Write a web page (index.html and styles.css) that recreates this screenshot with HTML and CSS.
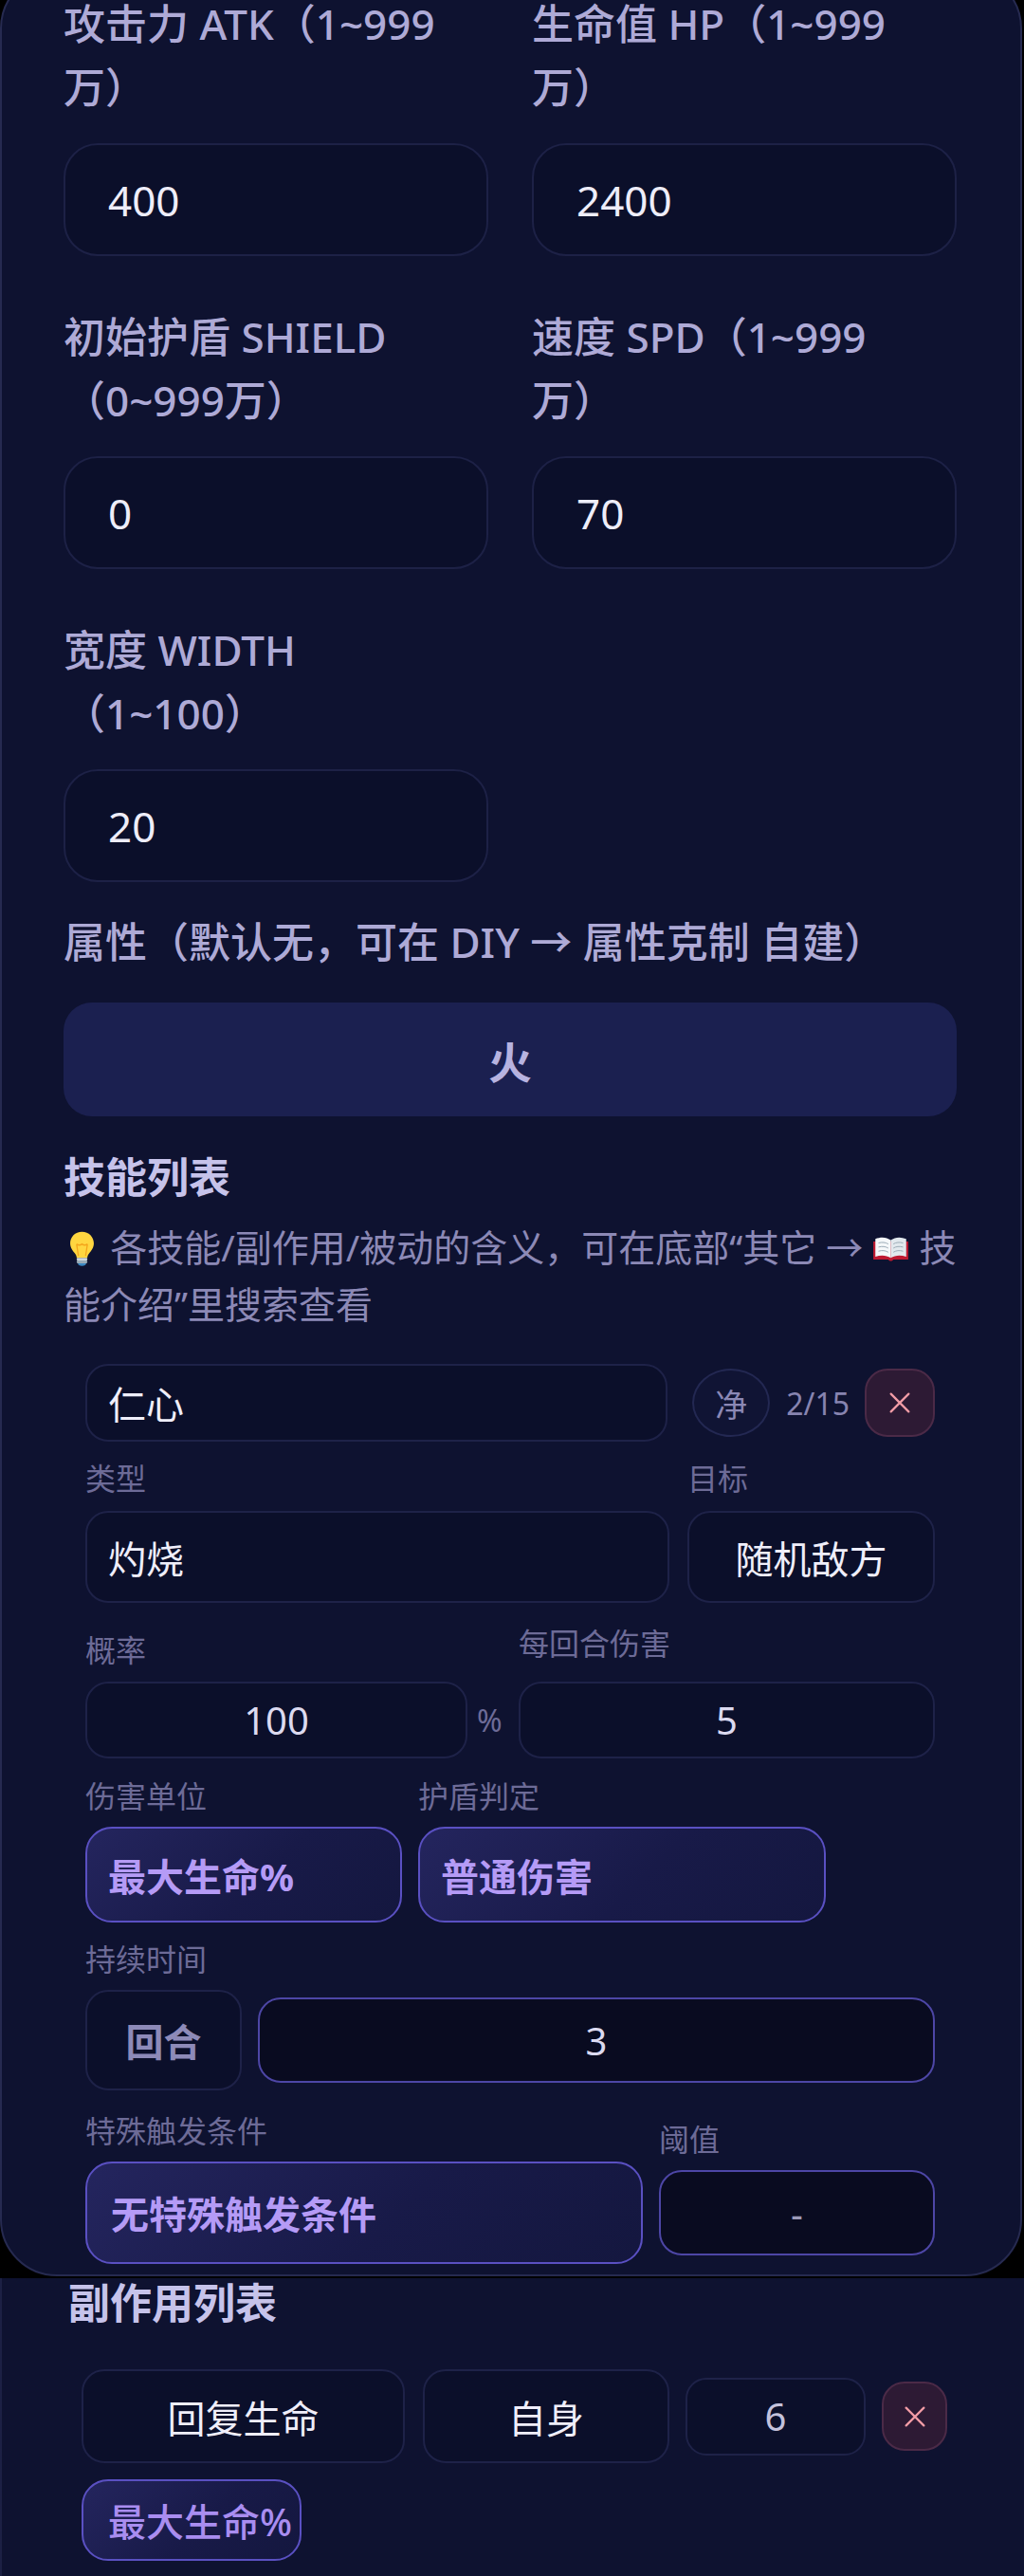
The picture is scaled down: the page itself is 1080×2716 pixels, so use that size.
FILE: index.html
```html
<!DOCTYPE html>
<html lang="zh-CN">
<head>
    <meta charset="UTF-8">
    <meta name="viewport" content="width=device-width, initial-scale=1.0">
    <title>角色编辑</title>
    <link rel="stylesheet" href="styles.css">
</head>
<body>
    <div class="editor-card">
        <div class="stat-grid">
            <div class="stat-field">
                <label class="stat-label">攻击力 ATK（1~999万）</label>
                <input class="stat-input" type="text" value="400">
            </div>
            <div class="stat-field">
                <label class="stat-label">生命值 HP（1~999万）</label>
                <input class="stat-input" type="text" value="2400">
            </div>
            <div class="stat-field">
                <label class="stat-label">初始护盾 SHIELD（0~999万）</label>
                <input class="stat-input" type="text" value="0">
            </div>
            <div class="stat-field">
                <label class="stat-label">速度 SPD（1~999万）</label>
                <input class="stat-input" type="text" value="70">
            </div>
            <div class="stat-field">
                <label class="stat-label">宽度 WIDTH（1~100）</label>
                <input class="stat-input" type="text" value="20">
            </div>
        </div>

        <div class="attr-label">属性（默认无，可在 DIY → 属性克制 自建）</div>
        <button class="attr-btn">火</button>

        <h2 class="section-title">技能列表</h2>
        <p class="hint">
            <svg class="emoji" viewBox="0 0 36 36">
                <path d="M18 1.5C11.2 1.5 6.5 6.6 6.5 12.8c0 4.6 2.4 7.2 4.4 9.6 1.3 1.6 1.9 3.1 1.9 4.6h10.4c0-1.5.6-3 1.9-4.6 2-2.4 4.4-5 4.4-9.6C29.5 6.6 24.8 1.5 18 1.5z" fill="#ffd640"/>
                <path d="M14.5 25l-1.8-11.5M21.5 25l1.8-11.5M12.7 13.5c1.8 1.4 3.6 1.4 5.3 0 1.7 1.4 3.5 1.4 5.3 0" fill="none" stroke="#f4a51c" stroke-width="1.2"/>
                <rect x="12.8" y="27" width="10.4" height="2.6" rx="1" fill="#ccd6dd"/>
                <rect x="12.8" y="29.6" width="10.4" height="2.6" rx="1" fill="#99aab5"/>
                <path d="M14 32.2h8c0 1.6-1.8 2.6-4 2.6s-4-1-4-2.6z" fill="#3b88c3"/>
            </svg> 各技能/副作用/被动的含义，可在底部“其它 → <svg class="emoji" viewBox="0 0 36 36">
                <path d="M1 11h34v17.5H20.5c-.8 1-1.6 1.5-2.5 1.5s-1.7-.5-2.5-1.5H1z" fill="#be1931"/>
                <path d="M3 8.5c5.5-2.2 11-1.8 15 1.3v17.3c-4-2.8-9.5-3.2-15-1.3z" fill="#f5f8fa"/>
                <path d="M33 8.5c-5.5-2.2-11-1.8-15 1.3v17.3c4-2.8 9.5-3.2 15-1.3z" fill="#e1e8ed"/>
                <path d="M6 12.5c3.5-1 7-.7 9.5 1M6 16.5c3.5-1 7-.7 9.5 1M6 20.5c3.5-1 7-.7 9.5 1M30 12.5c-3.5-1-7-.7-9.5 1M30 16.5c-3.5-1-7-.7-9.5 1M30 20.5c-3.5-1-7-.7-9.5 1" fill="none" stroke="#99aab5" stroke-width="0.9"/>
            </svg> 技能介绍”里搜索查看
        </p>

        <div class="skill">
            <div class="skill-head">
                <input class="box name-input" type="text" value="仁心">
                <button class="pure-btn">净</button>
                <span class="count">2/15</span>
                <button class="del-btn">
                    <svg viewBox="0 0 24 24"><path d="M5 5l14 14M19 5L5 19"/></svg>
                </button>
            </div>

            <div class="row row-type">
                <div class="cell">
                    <div class="mini-label">类型</div>
                    <button class="box select">灼烧</button>
                </div>
                <div class="cell">
                    <div class="mini-label">目标</div>
                    <button class="box select center">随机敌方</button>
                </div>
            </div>

            <div class="row row-rate">
                <div class="cell">
                    <div class="mini-label">概率</div>
                    <div class="rate-line">
                        <input class="box num-input" type="text" value="100">
                        <span class="unit">%</span>
                    </div>
                </div>
                <div class="cell">
                    <div class="mini-label">每回合伤害</div>
                    <input class="box num-input" type="text" value="5">
                </div>
            </div>

            <div class="row row-unit">
                <div class="cell">
                    <div class="mini-label">伤害单位</div>
                    <button class="chip">最大生命%</button>
                </div>
                <div class="cell">
                    <div class="mini-label">护盾判定</div>
                    <button class="chip">普通伤害</button>
                </div>
            </div>

            <div class="row-dur">
                <div class="mini-label">持续时间</div>
                <div class="dur-line">
                    <button class="box dur-unit">回合</button>
                    <input class="box num-input dark" type="text" value="3">
                </div>
            </div>

            <div class="row row-trig">
                <div class="cell">
                    <div class="mini-label">特殊触发条件</div>
                    <button class="chip tall">无特殊触发条件</button>
                </div>
                <div class="cell">
                    <div class="mini-label">阈值</div>
                    <input class="box num-input dark muted" type="text" value="-">
                </div>
            </div>
        </div>
    </div>

    <div class="effect-panel">
        <h2 class="section-title">副作用列表</h2>
        <div class="effect-row">
            <button class="box effect-kind">回复生命</button>
            <button class="box effect-target">自身</button>
            <input class="box effect-value" type="text" value="6">
            <button class="del-btn small">
                <svg viewBox="0 0 24 24"><path d="M5 5l14 14M19 5L5 19"/></svg>
            </button>
        </div>
        <button class="chip effect-unit">最大生命%</button>
    </div>
</body>
</html>
```

FILE: styles.css
```css
* {
    box-sizing: border-box;
}

body {
    margin: 0;
    height: 2716px;
    overflow: hidden;
    background-color: #000;
    color: #ecebf8;
    font-family: "Noto Sans", "Noto Sans CJK SC", sans-serif;
    text-spacing-trim: space-all;
}

input,
button {
    font: inherit;
    color: inherit;
    margin: 0;
    outline: none;
}

button {
    cursor: pointer;
}

/* main editor card (page is scrolled, top edge sits above the fold) */
.editor-card {
    width: 1078px;
    margin-top: -30px;
    padding: 20px 67px 11px 65px;
    background-color: #0e1230;
    border: 2px solid #262a50;
    border-radius: 60px;
}

.stat-grid {
    display: grid;
    grid-template-columns: 1fr 1fr;
    column-gap: 46px;
    row-gap: 52px;
}

.stat-label {
    display: block;
    padding-right: 20px;
    margin-bottom: 25px;
    font-size: 44px;
    line-height: 67px;
    font-weight: 500;
    color: #aeaad6;
}

.stat-input {
    display: block;
    width: 100%;
    height: 119px;
    padding: 0 0 0 45px;
    background-color: #0b0f2a;
    border: 2px solid #1d2146;
    border-radius: 36px;
    font-size: 44px;
    color: #eeedf9;
}

.attr-label {
    margin-top: 30px;
    font-size: 44px;
    line-height: 67px;
    font-weight: 500;
    color: #aeaad6;
}

.attr-btn {
    display: block;
    width: 100%;
    height: 120px;
    margin-top: 30px;
    border: none;
    border-radius: 30px;
    background-color: #1b2050;
    color: #b7b3e0;
    font-size: 46px;
    font-weight: 600;
}

.section-title {
    margin: 31px 0 0;
    font-size: 44px;
    line-height: 66px;
    font-weight: 700;
    color: #c6c3ea;
}

.hint {
    margin: 11px 0 0;
    font-size: 39px;
    line-height: 60px;
    color: #8c89b6;
}

.emoji {
    width: 39px;
    height: 39px;
    vertical-align: -6px;
}

/* skill item */
.skill {
    margin-top: 33px;
    padding: 0 23px;
}

.box {
    background-color: #0b0f2a;
    border: 2px solid #1e2248;
    border-radius: 24px;
    color: #efeefa;
    font-size: 40px;
}

.skill-head {
    display: flex;
    align-items: center;
    height: 82px;
}

.name-input {
    flex: 1;
    min-width: 0;
    height: 82px;
    padding: 0 0 0 22px;
}

.pure-btn {
    width: 82px;
    height: 72px;
    margin-left: 26px;
    padding: 0;
    border: 2px solid #232852;
    border-radius: 50%;
    background-color: #101434;
    color: #8b88b5;
    font-size: 34px;
}

.count {
    margin-left: 17px;
    font-size: 32px;
    color: #8784b0;
}

.del-btn {
    display: flex;
    justify-content: center;
    align-items: center;
    width: 74px;
    height: 72px;
    margin-left: 16px;
    padding: 0;
    background-color: #2d1a34;
    border: 2px solid #4b2a47;
    border-radius: 24px;
}

.del-btn svg {
    width: 32px;
    height: 32px;
    fill: none;
    stroke: #f29ca6;
    stroke-width: 1.7;
    stroke-linecap: round;
}

.mini-label {
    margin-bottom: 12px;
    font-size: 32px;
    line-height: 44px;
    color: #6d6b97;
}

.row {
    display: grid;
    align-items: end;
}

.row-type {
    margin-top: 17px;
    grid-template-columns: 1fr 261px;
    column-gap: 19px;
}

.select {
    display: block;
    width: 100%;
    height: 97px;
    padding: 0 0 0 22px;
    text-align: left;
}

.select.center {
    padding: 0;
    text-align: center;
}

.row-rate {
    margin-top: 21px;
    grid-template-columns: 440px 1fr;
    column-gap: 17px;
}

.row-rate .mini-label {
    margin-bottom: 11px;
}

.row-rate .cell + .cell .mini-label {
    margin-bottom: 18px;
}

.rate-line {
    display: flex;
    align-items: center;
    gap: 10px;
}

.num-input {
    display: block;
    width: 100%;
    min-width: 0;
    height: 81px;
    padding: 0;
    text-align: center;
    color: #dcdaf0;
}

.num-input.dark {
    height: 90px;
    background-color: #090b20;
    border-color: #4d46a6;
}

.num-input.muted {
    color: #9c9ab8;
}

.unit {
    flex: none;
    width: 27px;
    font-size: 32px;
    color: #6d6b97;
}

.row-unit {
    margin-top: 18px;
    grid-template-columns: 334px 430px;
    column-gap: 17px;
}

.row-unit .mini-label,
.row-dur .mini-label,
.row-trig .mini-label {
    margin-bottom: 10px;
}

.chip {
    display: block;
    width: 100%;
    height: 101px;
    padding: 0 0 0 22px;
    text-align: left;
    border: 2px solid #5a50c2;
    border-radius: 28px;
    background: linear-gradient(135deg, #24255e 0%, #181a48 55%, #14173f 100%);
    color: #b59bf6;
    font-size: 40px;
    font-weight: 700;
}

.chip.tall {
    height: 108px;
    padding-left: 25px;
}

.row-dur {
    margin-top: 17px;
}

.dur-line {
    display: flex;
    align-items: center;
    gap: 17px;
}

.dur-unit {
    flex: none;
    width: 165px;
    height: 106px;
    padding: 0;
    color: #8d8ab8;
    font-weight: 700;
}

.dur-line .num-input {
    flex: 1;
}

.row-trig {
    margin-top: 21px;
    grid-template-columns: 1fr 291px;
    column-gap: 17px;
    align-items: center;
}

/* side effect list below the card */
.effect-panel {
    height: 320px;
    margin-top: 2px;
    padding-left: 70px;
    background-color: #0e1230;
    border-left: 2px solid #1c2044;
}

.effect-panel .section-title {
    margin: 0;
    line-height: 52px;
}

.effect-row {
    display: flex;
    align-items: center;
    margin: 44px 0 0 14px;
}

.effect-kind {
    width: 341px;
    height: 99px;
    padding: 0;
}

.effect-target {
    width: 260px;
    height: 99px;
    margin-left: 19px;
    padding: 0;
}

.effect-value {
    width: 190px;
    height: 82px;
    margin-left: 17px;
    padding: 0;
    border-radius: 22px;
    text-align: center;
    color: #c4c2dc;
}

.del-btn.small {
    width: 69px;
    height: 73px;
    margin-left: 17px;
}

.effect-unit {
    width: 232px;
    height: 86px;
    margin: 17px 0 0 14px;
    padding-left: 26px;
    font-weight: 500;
    color: #a98df0;
}
```
